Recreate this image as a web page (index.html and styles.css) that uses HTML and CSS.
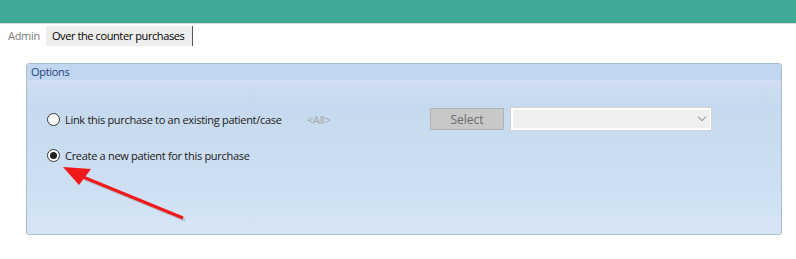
FILE: index.html
```html
<!DOCTYPE html>
<html lang="en">
<head>
    <meta charset="UTF-8">
    <title>Over the counter purchases</title>
    <link rel="stylesheet" href="styles.css">
</head>
<body>
    <div class="topbar"></div>
    <div class="tabs">
        <span class="tab">Admin</span>
        <span class="tab active">Over the counter purchases</span>
    </div>
    <div class="panel">
        <div class="panel-head">Options</div>
        <div class="panel-body">
            <div class="row">
                <label class="radio"><span class="dot"></span>Link this purchase to an existing patient/case</label>
                <span class="all">&lt;All&gt;</span>
                <button class="btn">Select</button>
                <div class="combo"><span class="chev"></span></div>
            </div>
            <div class="row">
                <label class="radio checked"><span class="dot"></span>Create a new patient for this purchase</label>
            </div>
        </div>
        <svg class="arrow" width="140" height="70" viewBox="0 0 140 70">
            <line x1="124" y1="55" x2="24" y2="14" stroke="#9aa6b4" stroke-width="3" opacity="0.5"/>
            <line x1="122" y1="53" x2="22" y2="12" stroke="#f01818" stroke-width="3"/>
            <polygon points="2,2 30,4 18,20" fill="#f01818"/>
        </svg>
    </div>
</body>
</html>
```

FILE: styles.css
```css
*{
    margin: 0;
    padding: 0;
    box-sizing: border-box;
}
body{
    font-family: "Open Sans", "Noto Sans", sans-serif;
    font-size: 11px;
    letter-spacing: -0.3px;
    color: #1a1a1a;
    background: #fff;
}
.topbar{
    height: 24px;
    background: #42a896;
    border-bottom: 1px solid #d8d8d8;
}
.tabs{
    display: flex;
    padding: 2px 0 0 4px;
}
.tab{
    height: 20px;
    line-height: 19px;
    padding: 0 4px;
    color: #7c7c7c;
}
.tab.active{
    margin-left: 2px;
    padding: 0 8px 0 6px;
    background: #eeeeee;
    color: #000;
    border-right: 1px solid #555;
    letter-spacing: -0.4px;
}
.panel{
    position: relative;
    margin: 17px 14px 0 26px;
    height: 172px;
    border: 1px solid #a9bcd2;
    border-radius: 3px;
    background: linear-gradient(#d6e3f3 0, #c7d9ee 40px, #cddff1 120px, #d6e6f5 100%);
    overflow: hidden;
}
.panel-head{
    height: 16px;
    line-height: 15px;
    padding-left: 4px;
    background: #c1d7ef;
    color: #1f3f7a;
    font-size: 11px;
}
.panel-body{
    padding: 28px 0 0 20px;
}
.row{
    display: flex;
    align-items: center;
    height: 22px;
    margin-bottom: 14px;
}
.radio{
    display: flex;
    align-items: center;
    width: 260px;
    white-space: nowrap;
}
.dot{
    width: 13px;
    height: 13px;
    border: 1px solid #333;
    border-radius: 50%;
    background: #fff;
    margin-right: 5px;
    display: flex;
    align-items: center;
    justify-content: center;
}
.checked .dot::after{
    content: "";
    width: 7px;
    height: 7px;
    border-radius: 50%;
    background: #222;
}
.all{
    color: #a4a4a4;
    width: 123px;
}
.btn{
    width: 74px;
    height: 22px;
    background: #c8c8c8;
    border: 1px solid #b3b3b3;
    color: #6a6a6a;
    font: 12px "Open Sans", "Noto Sans", sans-serif;
}
.combo{
    position: relative;
    width: 200px;
    height: 22px;
    margin-left: 7px;
    background: #efefef;
    border: 2px solid #fff;
    border-right-width: 1px;
    box-shadow: 0 0 0 1px #d2d2d2;
}
.chev{
    position: absolute;
    right: 5px;
    top: 4px;
    width: 6px;
    height: 6px;
    border-right: 1px solid #9a9a9a;
    border-bottom: 1px solid #9a9a9a;
    transform: rotate(45deg);
}
.arrow{
    position: absolute;
    left: 34px;
    top: 101px;
}
```
